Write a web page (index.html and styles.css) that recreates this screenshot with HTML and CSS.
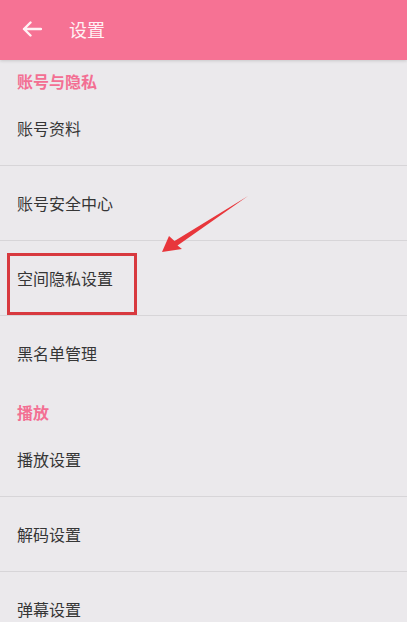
FILE: index.html
```html
<!DOCTYPE html>
<html lang="zh-CN">
<head>
    <meta charset="UTF-8">
    <meta name="viewport" content="width=device-width, initial-scale=1.0">
    <title>设置</title>
    <link rel="stylesheet" href="styles.css">
</head>
<body>
    <div class="toolbar">
        <svg class="back-icon" width="20" height="16" viewBox="0 0 20 16">
            <path d="M19 8H2M8.5 1.5L2 8l6.5 6.5" fill="none" stroke="#fff2f5" stroke-width="2.4" stroke-linecap="round" stroke-linejoin="round"/>
        </svg>
        <span class="toolbar-title">设置</span>
    </div>

    <div class="settings">
        <div class="section-title">账号与隐私</div>
        <div class="item">账号资料</div>
        <div class="item">账号安全中心</div>
        <div class="item">
            空间隐私设置
            <div class="highlight-box"></div>
        </div>
        <div class="item last">黑名单管理</div>

        <div class="section-title">播放</div>
        <div class="item">播放设置</div>
        <div class="item">解码设置</div>
        <div class="item last">弹幕设置</div>

        <svg class="pointer-arrow" width="100" height="70" viewBox="0 0 100 70">
            <polygon points="7,62 14,46 19.5,51 93,6 22.5,55.5 27,59" fill="#e8363b"/>
        </svg>
    </div>
</body>
</html>
```

FILE: styles.css
```css
body {
    margin: 0;
    padding: 0;
    background-color: #ebe9ec;
    font-family: "Noto Sans CJK SC", "Noto Sans", sans-serif;
    height: 622px;
    overflow: hidden;
}

.toolbar {
    height: 60px;
    background-color: #f67294;
    display: flex;
    align-items: center;
    padding-left: 22px;
    box-shadow: 0 1px 3px rgba(0, 0, 0, 0.15);
    position: relative;
    z-index: 1;
}

.back-icon {
    display: block;
    margin-top: -2px;
}

.toolbar-title {
    margin-left: 27px;
    font-size: 18px;
    color: #fff2f5;
    line-height: 20px;
    margin-top: -3px;
}

.settings {
    position: relative;
}

.section-title {
    padding: 11px 17px 0;
    line-height: 20px;
    font-size: 16px;
    font-weight: bold;
    color: #f36f93;
}

.item {
    box-sizing: border-box;
    height: 75px;
    display: flex;
    align-items: center;
    padding-left: 17px;
    font-size: 16px;
    color: #363636;
    border-bottom: 1px solid #d7d5d8;
    position: relative;
}

.item.last {
    border-bottom-color: transparent;
}

.highlight-box {
    position: absolute;
    left: 7px;
    top: 12px;
    width: 130px;
    height: 62px;
    box-sizing: border-box;
    border: 3px solid #d8393f;
}

.pointer-arrow {
    position: absolute;
    left: 155px;
    top: 130px;
}
```
